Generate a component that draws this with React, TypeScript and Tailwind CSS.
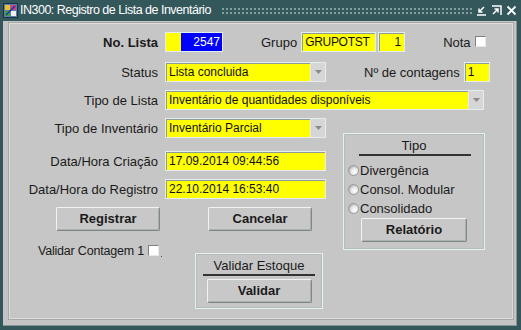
import React from "react";

const F = "font-['Liberation_Sans',Arial,sans-serif]";

function Field({ w, children, className = "" }: { w: string; children?: React.ReactNode; className?: string }) {
  return (
    <div
      className={`${w} h-[20px] border border-[#e4eeee] shadow-[inset_1px_1px_0_#8c9a9a] bg-[#ffff00] flex items-center pl-[3px] text-[12px] leading-none text-[#111] overflow-hidden whitespace-nowrap ${className}`}
    >
      {children}
    </div>
  );
}

function Drop({ w, children }: { w: string; children?: React.ReactNode }) {
  return (
    <div className={`${w} h-[20px] border border-[#e4eeee] shadow-[inset_1px_1px_0_#8c9a9a] bg-[#ffff00] flex items-stretch text-[12px] leading-none text-[#111]`}>
      <div className="flex-1 flex items-center pl-[3px] whitespace-nowrap overflow-hidden">{children}</div>
      <div className="w-[15px] bg-[#d6d6d6] border-l border-[#e8e8e8] flex items-center justify-center">
        <svg width="7" height="4" viewBox="0 0 7 4">
          <path d="M0 0 L7 0 L3.5 4 Z" fill="#8a8a8a" />
        </svg>
      </div>
    </div>
  );
}

function Btn({ w, children }: { w: string; children: React.ReactNode }) {
  return (
    <div
      className={`${w} h-[24px] rounded-[2px] bg-[#c8c8c8] border border-t-[#f2f2f2] border-l-[#f2f2f2] border-r-[#7e8888] border-b-[#7e8888] shadow-[inset_-1px_-1px_0_#a8b0b0] flex items-center justify-center font-bold text-[13px] text-[#1a1a1a]`}
    >
      {children}
    </div>
  );
}

function Check() {
  return <div className="w-[11px] h-[11px] bg-white border border-t-[#808080] border-l-[#808080] border-r-[#e8e8e8] border-b-[#e8e8e8]" />;
}

function Radio() {
  return (
    <div className="w-[11px] h-[11px] rounded-full bg-[radial-gradient(circle_at_65%_65%,#ffffff_0%,#e6e6e6_45%,#8a8a8a_100%)] border border-[#9a9a9a]" />
  );
}

function Label({ children, bold = false }: { children: React.ReactNode; bold?: boolean }) {
  return (
    <div className={`w-[149px] text-right pr-[1px] text-[13px] leading-none whitespace-nowrap ${bold ? "font-bold" : ""}`}>{children}</div>
  );
}

export default function App() {
  return (
    <div className={`w-[521px] h-[330px] bg-[#33575a] flex flex-col ${F} text-[#1a1a1a]`}>
      {/* title bar */}
      <div className="h-[21px] flex items-center pl-[3px] pr-[4px]">
        <svg width="15" height="15" viewBox="0 0 15 15">
          <rect x="0.5" y="0.5" width="14" height="14" fill="#5a7fa8" stroke="#1d2f4a" />
          <rect x="2" y="2" width="5" height="5" fill="#e8c030" />
          <rect x="8" y="2" width="5" height="5" fill="#d04080" />
          <rect x="2" y="8" width="5" height="5" fill="#40a040" />
          <rect x="8" y="8" width="5" height="5" fill="#f0f0f0" />
          <path d="M3 12 L12 3" stroke="#2030a0" strokeWidth="1.5" />
        </svg>
        <span className="ml-[2px] text-white text-[12.5px] tracking-[-0.5px] leading-none whitespace-nowrap">IN300: Registro de Lista de Inventário</span>
        <div className="ml-[10px] flex-1 h-[8px] bg-[radial-gradient(circle,#8fa8a8_0.8px,transparent_1px)] bg-[length:4px_4px] opacity-90" />
        <div className="ml-[4px] flex items-center gap-[4px]">
          <svg width="11" height="11" viewBox="0 0 11 11">
            <path d="M8 2 L3 7 M3 3.5 L3 7 L6.5 7 M1 10 L10 10" stroke="white" strokeWidth="1.5" fill="none" />
          </svg>
          <svg width="11" height="11" viewBox="0 0 11 11">
            <path d="M2 9 L7 4 M3.5 4 L7 4 L7 7.5 M1 1 L10 1 L10 10" stroke="white" strokeWidth="1.5" fill="none" />
          </svg>
          <svg width="11" height="11" viewBox="0 0 11 11">
            <path d="M1.5 1.5 L9.5 9.5 M9.5 1.5 L1.5 9.5" stroke="white" strokeWidth="1.8" fill="none" />
          </svg>
        </div>
      </div>
      {/* body */}
      <div className="ml-[3px] mr-[4px] h-[305px] bg-[#c4c4c4] pt-[2px] pl-[6px] pr-[3px] border-r border-b border-[#8a9494]">
        <div className="h-[296px] border border-[#dcdcdc] shadow-[0_0_0_1px_#a8a8a8] bg-[#c6c6c6] relative">
          {/* row 1 */}
          <div className="flex items-center mt-[8px] h-[20px]">
            <Label bold>No. Lista</Label>
            <div className="ml-[6px] w-[58px] h-[20px] border border-[#e4eeee] shadow-[inset_1px_1px_0_#8c9a9a] flex">
              <div className="w-[15px] bg-[#ffff00]" />
              <div className="flex-1 bg-[#0000ff] text-white text-[12px] leading-none flex items-center justify-end pr-[2px]">2547</div>
            </div>
            <div className="ml-[38px] text-[13px] leading-none">Grupo</div>
            <Field w="w-[75px] ml-[4px]" className="tracking-[-0.3px]">GRUPOTST</Field>
            <Field w="w-[27px] ml-[2px]" className="justify-end pr-[3px]">1</Field>
            <div className="ml-[38px] text-[13px] leading-none">Nota</div>
            <div className="ml-[4px] -mt-[2px]"><Check /></div>
          </div>
          {/* row 2 */}
          <div className="flex items-center mt-[10px] h-[20px]">
            <Label>Status</Label>
            <div className="ml-[6px]"><Drop w="w-[161px]">Lista concluida</Drop></div>
            <div className="ml-[38px] text-[13px] leading-none whitespace-nowrap">Nº de contagens</div>
            <Field w="w-[26px] ml-[4px]">1</Field>
          </div>
          {/* row 3 */}
          <div className="flex items-center mt-[8px] h-[20px]">
            <Label>Tipo de Lista</Label>
            <div className="ml-[6px]"><Drop w="w-[319px]">Inventário de quantidades disponíveis</Drop></div>
          </div>
          {/* split */}
          <div className="flex">
            <div className="w-[333px]">
              <div className="flex items-center mt-[8px] h-[20px]">
                <Label>Tipo de Inventário</Label>
                <div className="ml-[6px]"><Drop w="w-[161px]">Inventário Parcial</Drop></div>
              </div>
              <div className="flex items-center mt-[13px] h-[20px]">
                <Label>Data/Hora Criação</Label>
                <Field w="w-[161px] ml-[6px]">17.09.2014 09:44:56</Field>
              </div>
              <div className="flex items-center mt-[8px] h-[20px]">
                <Label>Data/Hora do Registro</Label>
                <Field w="w-[161px] ml-[6px]">22.10.2014 16:53:40</Field>
              </div>
              <div className="flex mt-[8px] ml-[46px] gap-[48px]">
                <Btn w="w-[104px]">Registrar</Btn>
                <Btn w="w-[104px]">Cancelar</Btn>
              </div>
              <div className="flex items-start mt-[13px]">
                <div className="w-[157px] pl-[28px] flex items-center h-[14px]">
                  <span className="text-[12.5px] tracking-[-0.2px] leading-none whitespace-nowrap">Validar Contagem 1</span>
                  <div className="ml-[4px] -mt-[2px]"><Check /></div>
                  <div className="ml-[2px] mt-[10px] w-[1px] h-[1px] bg-[#555]" />
                </div>
                <div className="ml-[28px] mt-[9px] w-[128px] h-[56px] border border-[#e4f2f2] shadow-[inset_0_0_0_1px_#b4bcbc] flex flex-col items-center">
                  <div className="mt-[5px] text-[13px] leading-[14px] whitespace-nowrap">Validar Estoque</div>
                  <div className="mt-[1px] w-[112px] h-[2px] bg-[#333]" />
                  <div className="mt-[3px]"><Btn w="w-[105px]">Validar</Btn></div>
                </div>
              </div>
            </div>
            <div className="mt-[23px] w-[142px] h-[117px] border border-[#e4f2f2] shadow-[inset_0_0_0_1px_#b4bcbc] flex flex-col">
              <div className="mt-[5px] text-center text-[13px] leading-[14px]">Tipo</div>
              <div className="mt-[1px] ml-[15px] w-[112px] h-[2px] bg-[#333]" />
              <div className="mt-[5px] flex flex-col">
                {["Divergência", "Consol. Modular", "Consolidado"].map((t) => (
                  <div key={t} className="h-[19px] flex items-center pl-[4px]">
                    <Radio />
                    <span className="ml-[1px] text-[13px] leading-none whitespace-nowrap">{t}</span>
                  </div>
                ))}
              </div>
              <div className="ml-[17px]"><Btn w="w-[106px]">Relatório</Btn></div>
            </div>
          </div>
        </div>
      </div>
    </div>
  );
}
